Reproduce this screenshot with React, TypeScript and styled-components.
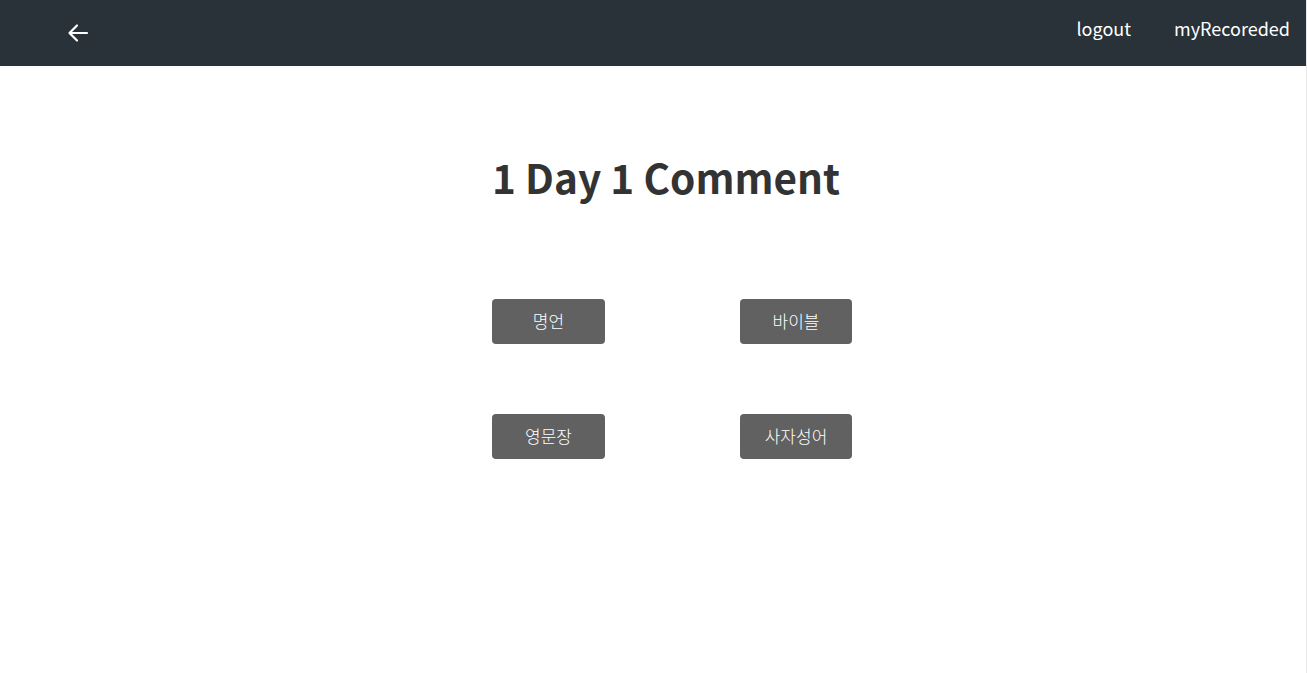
import React from "react";
import styled, { createGlobalStyle } from "styled-components";

const Global = createGlobalStyle`
  html, body { margin: 0; padding: 0; background: #fff; }
  body { font-family: "Noto Sans CJK KR", "Noto Sans", sans-serif; }
`;

const Page = styled.div`
  width: 1306px;
  min-height: 673px;
  border-right: 1px solid #e6e6e6;
  display: flex;
  flex-direction: column;
`;

const Header = styled.header`
  height: 66px;
  background: #283238;
  display: flex;
  align-items: center;
  padding: 0 16px 0 66px;
  box-sizing: border-box;
`;

const BackButton = styled.button`
  background: none;
  border: none;
  padding: 0;
  margin-top: -1px;
  width: 24px;
  height: 24px;
  display: flex;
  align-items: center;
  justify-content: center;
  cursor: pointer;
`;

const Nav = styled.nav`
  margin-left: auto;
  display: flex;
  gap: 43px;
  margin-top: -10px;
`;

const NavLink = styled.a`
  color: #fff;
  font-family: "Noto Sans CJK KR", sans-serif;
  font-size: 18px;
  text-decoration: none;
`;

const Main = styled.main`
  display: flex;
  flex-direction: column;
  align-items: center;
  padding-left: 38px;
`;

const Title = styled.h1`
  margin: 79px 12px 0 0;
  font-family: "Noto Sans CJK KR", sans-serif;
  font-weight: 700;
  font-size: 40.5px;
  line-height: 64px;
  color: #333;
`;

const Grid = styled.div`
  margin-top: 90px;
  display: grid;
  grid-template-columns: 113px 112px;
  column-gap: 135px;
  row-gap: 70px;
`;

const MenuButton = styled.button`
  height: 45px;
  background: #616161;
  border: none;
  border-radius: 4px;
  color: #fff;
  font-family: "Noto Sans CJK KR", sans-serif;
  font-size: 17px;
  font-weight: 300;
  padding: 0 0 3px;
  cursor: pointer;
`;

const items = ["명언", "바이블", "영문장", "사자성어"];

export default function App() {
  return (
    <>
      <Global />
      <Page>
        <Header>
          <BackButton aria-label="back">
            <svg width="22" height="20" viewBox="0 0 22 20" fill="none">
              <path
                d="M20 10H3M10 2.5L2.5 10L10 17.5"
                stroke="#fff"
                strokeWidth="2.2"
                strokeLinecap="round"
                strokeLinejoin="round"
              />
            </svg>
          </BackButton>
          <Nav>
            <NavLink href="#">logout</NavLink>
            <NavLink href="#">myRecoreded</NavLink>
          </Nav>
        </Header>
        <Main>
          <Title>1 Day 1 Comment</Title>
          <Grid>
            {items.map((t) => (
              <MenuButton key={t}>{t}</MenuButton>
            ))}
          </Grid>
        </Main>
      </Page>
    </>
  );
}
